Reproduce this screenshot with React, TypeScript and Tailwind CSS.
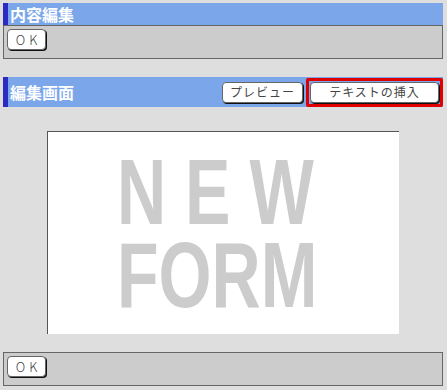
import React from 'react';

const jp = { fontFamily: '"Noto Sans CJK JP", "Noto Sans", sans-serif' };

function OkButton() {
    return (
        <button
            className="flex h-[21px] w-[39px] items-center justify-center rounded-[4px] border border-[#666] bg-white text-[13px] font-light leading-none tracking-[4px] text-[#444] shadow-[1px_1px_0_#111]"
            style={jp}
        >
            <span className="pl-[4px]">OK</span>
        </button>
    );
}

function Header({ title, children }: { title: string; children?: React.ReactNode }) {
    return (
        <div className="flex h-full items-center bg-[#7ba7ea]">
            <div className="h-full w-[5px] bg-[#2b2bc3]" />
            <span className="ml-[2px] text-[16px] font-bold leading-none text-white" style={jp}>
                {title}
            </span>
            <div className="ml-auto flex items-center">{children}</div>
        </div>
    );
}

export default function App() {
    return (
        <div className="h-[390px] w-[447px] overflow-hidden bg-[#dedede] pl-[3px] pr-[4px] pt-[3px]">
            {/* 内容編集 */}
            <div className="h-[22px]">
                <Header title="内容編集" />
            </div>
            <div className="flex h-[34px] items-start border border-[#666] bg-[#cccccc] pl-[3px] pt-[3px]">
                <OkButton />
            </div>

            {/* 編集画面 */}
            <div className="mt-[18px] h-[30px]">
                <Header title="編集画面">
                    <button
                        className="flex h-[21px] w-[81px] items-center justify-center rounded-[4px] border border-[#666] bg-white text-[12px] leading-none tracking-[1px] text-[#444] shadow-[1px_1px_0_#111]"
                        style={jp}
                    >
                        プレビュー
                    </button>
                    <div className="ml-[3px] rounded-[2px] border-[3px] border-[#e00000] p-[1px]">
                        <button
                            className="flex h-[21px] w-[129px] items-center justify-center rounded-[4px] border border-[#666] bg-white text-[12px] leading-none tracking-[1px] text-[#444] shadow-[1px_1px_0_#111]"
                            style={jp}
                        >
                            テキストの挿入
                        </button>
                    </div>
                </Header>
            </div>

            {/* canvas */}
            <div className="ml-[44px] mt-[24px] flex h-[203px] w-[352px] flex-col border-l border-t border-[#555] bg-white pl-[69px] pt-[19px]">
                <div
                    className="h-[83px] origin-left scale-x-[0.74] whitespace-pre text-[92px] font-bold leading-[83px] text-[#cccccc]"
                    style={{ fontFamily: '"Liberation Sans", Arial, sans-serif' }}
                >
                    {'N E W'}
                </div>
                <div
                    className="h-[83px] origin-left scale-x-[0.74] text-[92px] font-bold leading-[83px] text-[#cccccc]"
                    style={{ fontFamily: '"Liberation Sans", Arial, sans-serif' }}
                >
                    FORM
                </div>
            </div>

            {/* bottom */}
            <div className="mt-[18px] flex h-[34px] items-start border border-[#666] bg-[#cccccc] pl-[3px] pt-[3px]">
                <OkButton />
            </div>
        </div>
    );
}
